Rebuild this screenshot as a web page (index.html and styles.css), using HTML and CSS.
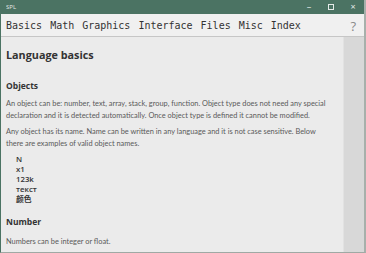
FILE: index.html
```html
<!DOCTYPE html>
<html lang="en">
<head>
  <meta charset="UTF-8" />
  <title>SPL</title>
  <link rel="stylesheet" href="styles.css">
</head>
<body>
  <div class="window">
    <div class="titlebar">
      <span class="title">SPL</span>
      <div class="controls">
        <span class="ctl">&#8211;</span>
        <span class="ctl box"></span>
        <span class="ctl">&#215;</span>
      </div>
    </div>

    <div class="menubar">
      <nav class="menu">
        <a>Basics</a>
        <a>Math</a>
        <a>Graphics</a>
        <a>Interface</a>
        <a>Files</a>
        <a>Misc</a>
        <a>Index</a>
      </nav>
      <span class="help">?</span>
    </div>

    <div class="body">
      <div class="content">
        <h1>Language basics</h1>
        <h2>Objects</h2>
        <p>An object can be: number, text, array, stack, group, function. Object type does not need any special declaration and it is detected automatically. Once object type is defined it cannot be modified.</p>
        <p>Any object has its name. Name can be written in any language and it is not case sensitive. Below there are examples of valid object names.</p>
        <div class="names">
          <div>N</div>
          <div>x1</div>
          <div>123k</div>
          <div>текст</div>
          <div>颜色</div>
        </div>
        <h2 class="section">Number</h2>
        <p>Numbers can be integer or float.</p>
      </div>
      <div class="scrollbar"></div>
    </div>
  </div>
</body>
</html>
```

FILE: styles.css
```css
:root {
  --title-green: #4b7363;
  --menu-bg: #f0f0f0;
  --page-bg: #ebebeb;
  --scroll-bg: #d8d8d8;
  --ink: #333333;
  --muted: #5a5a5a;
}

body {
  margin: 0;
  font-family: "Open Sans", "Noto Sans CJK SC", sans-serif;
  background-color: #ffffff;
}

.window {
  width: 366px;
  height: 253px;
  box-sizing: border-box;
  display: flex;
  flex-direction: column;
  border: 1px solid var(--title-green);
  border-top: none;
  border-right: 2px solid #a7b0ab;
  border-bottom-color: #9fa9a4;
  overflow: hidden;
}

.titlebar {
  height: 14px;
  flex: none;
  background-color: var(--title-green);
  display: flex;
  align-items: center;
  justify-content: space-between;
  color: #ffffff;
}

.title {
  font-size: 6px;
  padding-left: 5px;
  opacity: 0.85;
}

.controls {
  display: flex;
  align-items: center;
}

.ctl {
  width: 22px;
  text-align: center;
  font-size: 9px;
  line-height: 14px;
  opacity: 0.85;
}

.ctl.box {
  width: 6px;
  height: 6px;
  margin: 0 8px;
  border: 1px solid #ffffff;
  box-sizing: border-box;
}

.menubar {
  height: 23px;
  flex: none;
  background-color: var(--menu-bg);
  border-bottom: 1px solid #c6c6c6;
  display: flex;
  align-items: center;
  justify-content: space-between;
  padding: 1px 8px 0 5px;
  box-sizing: border-box;
}

.menu {
  display: flex;
  gap: 8px;
  font-family: "DejaVu Sans Mono", monospace;
  font-size: 10px;
  color: var(--ink);
}

.help {
  font-family: "Open Sans", sans-serif;
  font-size: 13px;
  color: #8a8a8a;
}

.body {
  flex: 1;
  display: flex;
  min-height: 0;
}

.content {
  flex: 1;
  background-color: var(--page-bg);
  padding: 10px 10px 0 5px;
  color: var(--muted);
  overflow: hidden;
}

.scrollbar {
  width: 20px;
  flex: none;
  background-color: var(--scroll-bg);
  border-left: 1px solid #e2e2e2;
}

h1 {
  font-size: 10.8px;
  font-weight: 700;
  color: var(--ink);
  margin: 0 0 17px 0;
  line-height: 16px;
}

h2 {
  font-size: 8.5px;
  font-weight: 700;
  color: var(--ink);
  margin: 0 0 6px 0;
  line-height: 12px;
}

h2.section {
  margin-bottom: 8px;
}

p {
  font-family: "Lato", "Noto Sans CJK SC", sans-serif;
  font-size: 7.4px;
  line-height: 12px;
  margin: 0 0 4px 0;
}

.names {
  font-size: 7.8px;
  line-height: 10px;
  font-weight: 600;
  color: var(--ink);
  padding: 0 0 0 10px;
  margin-bottom: 12px;
}
```
